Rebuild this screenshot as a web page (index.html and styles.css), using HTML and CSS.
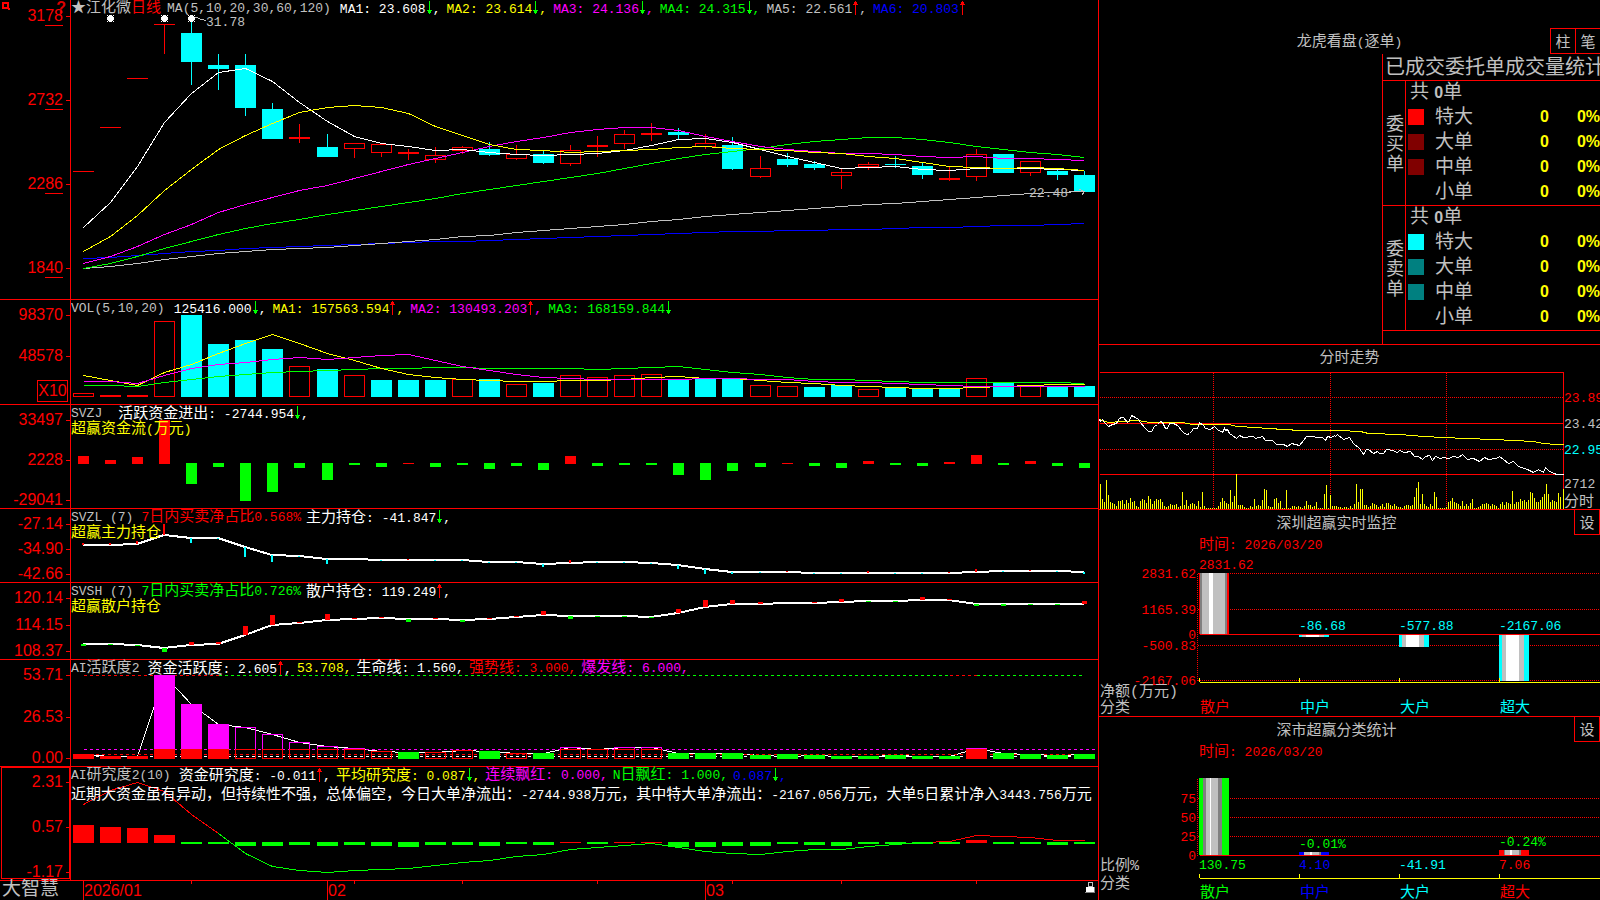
FILE: index.html
```html
<!DOCTYPE html>
<html lang="zh-CN">
<head>
<meta charset="utf-8">
<title>江化微 日线 - 大智慧</title>
<link rel="stylesheet" href="styles.css">
</head>
<body>
<svg class="defs" aria-hidden="true">
  <symbol id="down" viewBox="0 0 7 14"><path d="M3 0h1v9h2v1h-1v2h-1v1h-1v-1h-1v-2h-1v-1h2z"/></symbol>
  <symbol id="up" viewBox="0 0 7 14"><path d="M3 14h1v-10h2v-1h-1v-2h-1v-1h-1v1h-1v2h-1v1h2z"/></symbol>
</svg>
<main class="screen">
  <div class="charts">
    <section class="panel">
      <div class="axis axis-price">
        <svg class="mark" viewBox="0 0 8 8"><path d="M1 1h5v5h-5z M6 6l2 2"/></svg>
        <b class="help">?</b>
        <span class="tick">31<i>78</i></span><span class="tick">27<i>32</i></span><span class="tick">22<i>86</i></span><span class="tick">18<i>40</i></span>
      </div>
      <div class="plot">
        <svg class="layer" id="price"></svg>
        <header class="legend legend-wide legend-top">
          <span><em>★江化微</em><em class="red">日线</em></span>
          <span class="name">MA(5,10,20,30,60,120)</span>
          <span class="white">MA1: 23.608<svg class="arrow down"><use href="#down"/></svg>,</span>
          <span class="yellow">MA2: 23.614<svg class="arrow down"><use href="#down"/></svg>,</span>
          <span class="magenta">MA3: 24.136<svg class="arrow down"><use href="#down"/></svg>,</span>
          <span class="green">MA4: 24.315<svg class="arrow down"><use href="#down"/></svg>,</span>
          <span class="gray">MA5: 22.561<svg class="arrow up"><use href="#up"/></svg>,</span>
          <span class="blue">MA6: 20.803<svg class="arrow up"><use href="#up"/></svg></span>
        </header>
      </div>
    </section>

    <section class="panel">
      <div class="axis axis-volume"><span class="tick">98370</span><span class="tick">48578</span><span class="unit">X10</span></div>
      <div class="plot">
        <svg class="layer" id="volume"></svg>
        <header class="legend legend-wide">
          <span class="name">VOL(5,10,20)</span>
          <span class="white">125416.000<svg class="arrow down"><use href="#down"/></svg>,</span>
          <span class="yellow">MA1: 157563.594<svg class="arrow up"><use href="#up"/></svg>,</span>
          <span class="magenta">MA2: 130493.203<svg class="arrow up"><use href="#up"/></svg>,</span>
          <span class="green">MA3: 168159.844<svg class="arrow down"><use href="#down"/></svg></span>
        </header>
      </div>
    </section>

    <section class="panel">
      <div class="axis"><span class="tick">33497</span><span class="tick">2228</span><span class="tick">-29041</span></div>
      <div class="plot">
        <svg class="layer" id="flow"></svg>
        <header class="legend">
          <span class="name wide">SVZJ</span>
          <span class="white"><em>活跃资金进出</em>: -2744.954<svg class="arrow down"><use href="#down"/></svg>,</span>
        </header>
        <p class="sub yellow">超赢资金流<small>(</small>万元<small>)</small></p>
      </div>
    </section>

    <section class="panel">
      <div class="axis"><span class="tick">-27.14</span><span class="tick">-34.90</span><span class="tick">-42.66</span></div>
      <div class="plot">
        <svg class="layer" id="major"></svg>
        <header class="legend">
          <span class="name">SVZL (7)</span>
          <span class="red">7<em>日内买卖净占比</em>0.568%</span>
          <span class="white"><em>主力持仓</em>: -41.847<svg class="arrow down"><use href="#down"/></svg>,</span>
        </header>
        <p class="sub yellow">超赢主力持仓</p>
      </div>
    </section>

    <section class="panel">
      <div class="axis"><span class="tick">120.14</span><span class="tick">114.15</span><span class="tick">108.37</span></div>
      <div class="plot">
        <svg class="layer" id="retail"></svg>
        <header class="legend">
          <span class="name">SVSH (7)</span>
          <span class="green">7<em>日内买卖净占比</em>0.726%</span>
          <span class="white"><em>散户持仓</em>: 119.249<svg class="arrow up"><use href="#up"/></svg>,</span>
        </header>
        <p class="sub yellow">超赢散户持仓</p>
      </div>
    </section>

    <section class="panel">
      <div class="axis"><span class="tick">53.71</span><span class="tick">26.53</span><span class="tick">0.00</span></div>
      <div class="plot">
        <svg class="layer" id="activity"></svg>
        <header class="legend">
          <span class="name">AI<em>活跃度</em>2</span>
          <span class="white"><em>资金活跃度</em>: 2.605<svg class="arrow up"><use href="#up"/></svg>,</span>
          <span class="yellow">53.708,</span>
          <span class="white"><em>生命线</em>: 1.560,</span>
          <span class="red"><em>强势线</em>: 3.000,</span>
          <span class="magenta"><em>爆发线</em>: 6.000,</span>
        </header>
      </div>
    </section>

    <section class="panel">
      <div class="axis axis-active"><span class="tick">2.31</span><span class="tick">0.57</span><span class="tick">-1.17</span></div>
      <div class="plot">
        <svg class="layer" id="research"></svg>
        <header class="legend">
          <span class="name">AI<em>研究度</em>2(10)</span>
          <span class="white"><em>资金研究度</em>: -0.011<svg class="arrow up"><use href="#up"/></svg>,</span>
          <span class="yellow"><em>平均研究度</em>: 0.087<svg class="arrow down"><use href="#down"/></svg>,</span>
          <span class="magenta"><em>连续飘红</em>: 0.000,</span>
          <span class="green">N<em>日飘红</em>: 1.000,</span>
          <span class="blue">0.087<svg class="arrow down"><use href="#down"/></svg>,</span>
        </header>
        <p class="comment">近期大资金虽有异动，但持续性不强，总体偏空，今日大单净流出：<small>-2744.938</small>万元，其中特大单净流出：<small>-2167.056</small>万元，大单<small>5</small>日累计净入<small>3443.756</small>万元</p>
      </div>
    </section>

    <footer class="panel timeline">
      <div class="brand">大智慧</div>
      <div class="plot"><svg class="layer" id="dates"></svg></div>
    </footer>
  </div>

  <aside class="side">
    <section class="block orders">
      <header class="orders-head">
        <h2 class="title">龙虎看盘<small>(</small>逐单<small>)</small></h2>
        <div class="buttons"><button type="button">柱</button><button type="button">笔</button></div>
      </header>
      <div class="orders-body">
        <div class="stats">
          <h3>已成交委托单成交量统计</h3>
          <table>
            <colgroup><col class="col-side"><col class="col-key"><col class="col-size"><col class="col-count"><col></colgroup>
            <tbody>
              <tr><th class="direction" rowspan="5" scope="rowgroup">委<br>买<br>单</th><td class="total" colspan="4">共 <b>0</b>单</td></tr>
              <tr><td class="key"><i class="swatch buy-max"></i></td><td class="size">特大</td><td class="count">0</td><td class="share">0%</td></tr>
              <tr><td class="key"><i class="swatch buy"></i></td><td class="size">大单</td><td class="count">0</td><td class="share">0%</td></tr>
              <tr><td class="key"><i class="swatch buy"></i></td><td class="size">中单</td><td class="count">0</td><td class="share">0%</td></tr>
              <tr><td class="key"></td><td class="size">小单</td><td class="count">0</td><td class="share">0%</td></tr>
            </tbody>
            <tbody>
              <tr><th class="direction" rowspan="5" scope="rowgroup">委<br>卖<br>单</th><td class="total" colspan="4">共 <b>0</b>单</td></tr>
              <tr><td class="key"><i class="swatch sell-max"></i></td><td class="size">特大</td><td class="count">0</td><td class="share">0%</td></tr>
              <tr><td class="key"><i class="swatch sell"></i></td><td class="size">大单</td><td class="count">0</td><td class="share">0%</td></tr>
              <tr><td class="key"><i class="swatch sell"></i></td><td class="size">中单</td><td class="count">0</td><td class="share">0%</td></tr>
              <tr><td class="key"></td><td class="size">小单</td><td class="count">0</td><td class="share">0%</td></tr>
            </tbody>
          </table>
        </div>
      </div>
    </section>

    <section class="block">
      <h2 class="title intraday-title">分时走势</h2>
      <div class="plot"><svg class="layer" id="intraday"></svg></div>
    </section>

    <section class="block">
      <header class="block-head"><h2 class="title">深圳超赢实时监控</h2><button type="button">设</button></header>
      <p class="time red">时间<small>: 2026/03/20</small></p>
      <div class="plot"><svg class="layer" id="monitor"></svg></div>
    </section>

    <section class="block">
      <header class="block-head"><h2 class="title">深市超赢分类统计</h2><button type="button">设</button></header>
      <p class="time red">时间<small>: 2026/03/20</small></p>
      <div class="plot"><svg class="layer" id="category"></svg></div>
    </section>
  </aside>
</main>
<script src="charts.js"></script>
</body>
</html>
```

FILE: styles.css
```css
* {
  box-sizing: border-box;
}

body {
  margin: 0;
  background: #000;
  color: #c0c0c0;
  font-family: "Liberation Mono", "Noto Sans CJK SC", monospace;
  font-size: 13px;
  line-height: 15px;
}

h2,
h3,
p {
  margin: 0;
  font-weight: 400;
}

em,
i {
  font-style: normal;
}

em {
  font-size: 15px;
}

small {
  font-size: 13px;
}

.defs {
  position: absolute;
  width: 0;
  height: 0;
}

.red { color: #f00; }
.green { color: #0f0; }
.blue { color: #00f; }
.yellow { color: #ff0; }
.magenta { color: #f0f; }
.white { color: #fff; }
.gray { color: #c0c0c0; }

.screen {
  display: grid;
  grid-template-columns: minmax(0, 1099fr) minmax(0, 501fr);
  grid-template-rows: minmax(0, 1fr);
  height: 100vh;
  overflow: hidden;
}

/* Left column: stacked indicator panels */

.charts {
  display: grid;
  grid-template-rows:
    minmax(0, 299fr) minmax(0, 105fr) minmax(0, 104fr) minmax(0, 74fr)
    minmax(0, 77fr) minmax(0, 107fr) minmax(0, 114fr) minmax(0, 20fr);
  border-right: 1px solid #f00;
}

.panel {
  display: grid;
  grid-template-columns: 71px minmax(0, 1fr);
  grid-template-rows: minmax(0, 1fr);
}

.panel + .panel {
  box-shadow: inset 0 1px #f00;
}

.axis {
  display: flex;
  flex-direction: column;
  justify-content: space-between;
  position: relative;
  padding: 8px 0 0;
  border-right: 1px solid #f00;
  color: #f00;
  font-family: "Liberation Sans", sans-serif;
  font-size: 16px;
  line-height: 16px;
  text-align: right;
}

.tick {
  display: block;
  position: relative;
  padding-right: 7px;
}

.tick::after {
  content: "";
  position: absolute;
  top: 8px;
  right: 0;
  width: 4px;
  height: 1px;
  background: #f00;
}

.axis-price {
  padding-bottom: 23px;
}

.axis-price i {
  display: inline-block;
  height: 18px;
  margin-bottom: -2px;
  border-bottom: 1px solid #f00;
}

.axis-volume {
  justify-content: flex-start;
  gap: 25px;
}

.axis-active {
  outline: 1px solid #f00;
  outline-offset: -2px;
}

.unit {
  align-self: flex-end;
  width: 31px;
  margin: -9px 2px 0 0;
  border: 1px solid #f00;
  line-height: 20px;
  text-align: center;
}

.mark {
  position: absolute;
  top: 2px;
  left: 2px;
  width: 8px;
  height: 8px;
  fill: none;
  stroke: #f00;
  stroke-width: 2;
  shape-rendering: crispEdges;
}

.help {
  position: absolute;
  top: 0;
  right: 4px;
  color: #d00;
}

.plot {
  position: relative;
  overflow: hidden;
  min-height: 0;
}

.layer {
  position: absolute;
  inset: 0;
  width: 100%;
  height: 100%;
  shape-rendering: crispEdges;
}

.layer .num {
  font-size: 13px;
}

.layer .cjk {
  font-size: 15px;
}

.layer .date {
  font-family: "Liberation Sans", sans-serif;
  font-size: 16px;
}

.legend {
  display: flex;
  gap: 5px;
  position: relative;
  padding-top: 2px;
  white-space: nowrap;
}

.legend-wide {
  gap: 6px;
}

.legend-top {
  padding: 1px 0 0;
}

.name {
  margin-right: 3px;
}

.wide {
  margin-right: 11px;
}

.arrow {
  width: 7px;
  height: 14px;
  vertical-align: -2px;
}

.down { fill: #0f0; }
.up { fill: #f00; }

.sub,
.comment {
  position: relative;
  font-size: 15px;
  white-space: nowrap;
}

.comment {
  padding-top: 4px;
  color: #fff;
}

.brand {
  padding-left: 2px;
  font-size: 19px;
  line-height: 20px;
  white-space: nowrap;
}

/* Right column */

.side {
  display: grid;
  grid-template-rows: minmax(0, 344fr) minmax(0, 165fr) minmax(0, 207fr) minmax(0, 184fr);
}

.block {
  display: flex;
  flex-direction: column;
}

.block + .block {
  box-shadow: inset 0 1px #f00;
}

.block .plot {
  flex: 1;
}

.title {
  font-size: 15px;
  text-align: center;
}

button {
  width: 26px;
  height: 26px;
  padding: 0;
  border: 1px solid #f00;
  background: #000;
  color: #c0c0c0;
  font: 15px "Noto Sans CJK SC", sans-serif;
  line-height: 20px;
}

.orders-head {
  display: grid;
  grid-template-columns: 1fr auto 1fr;
  align-items: center;
  padding-top: 28px;
}

.orders-head .title {
  grid-column: 2;
  padding-top: 2px;
}

.buttons {
  display: flex;
  justify-self: end;
}

.buttons button {
  width: 25px;
  border-right: 0;
}

.orders-body {
  display: flex;
  flex: 1;
  justify-content: flex-end;
}

.stats {
  width: 218px;
  border-left: 1px solid #f00;
  overflow: hidden;
}

.stats h3 {
  padding: 4px 0 0 2px;
  font-size: 20px;
  line-height: 22px;
  white-space: nowrap;
}

.stats table {
  width: 100%;
  border-spacing: 0;
  table-layout: fixed;
  box-shadow: inset 0 1px #f00, 0 1px #f00;
  font-size: 19px;
  line-height: 20px;
}

.stats tbody + tbody {
  box-shadow: inset 0 1px #f00;
}

.col-side { width: 23px; }
.col-key { width: 25px; }
.col-size { width: 60px; }
.col-count { width: 58px; }

.stats td {
  height: 25px;
  padding: 0;
}

.stats .direction {
  padding: 0 0 30px 2px;
  border-right: 1px solid #f00;
  font-size: 18px;
  font-weight: 400;
  vertical-align: bottom;
}

.stats .total {
  padding-left: 4px;
  font-family: "Liberation Sans", "Noto Sans CJK SC", sans-serif;
}

.total b {
  font-size: 16px;
}

.stats .key {
  padding: 0 0 2px 2px;
}

.swatch {
  display: block;
  width: 16px;
  height: 16px;
}

.buy-max { background: #f00; }
.buy { background: #800000; }
.sell-max { background: #0ff; }
.sell { background: #008080; }

.stats .size {
  padding-left: 4px;
}

.stats .count,
.stats .share {
  padding-bottom: 2px;
  color: #ff0;
  font: 700 16px "Liberation Sans", sans-serif;
  text-align: right;
}

.intraday-title {
  padding-top: 2px;
  line-height: 26px;
}

.block-head {
  display: flex;
}

.block-head .title {
  flex: 1;
  padding-top: 6px;
  line-height: 20px;
}

.time {
  padding: 4px 0 0 100px;
  font-size: 15px;
  line-height: 14px;
}
```

FILE: charts.js
```js
(function () {
  var NS = 'http://www.w3.org/2000/svg';
  var C = { r: '#f00', c: '#0ff', g: '#0f0', y: '#ff0', m: '#f0f', b: '#00f', w: '#fff', s: '#c0c0c0', d: '#808080' };

  function Canvas(id, baseW, baseH) {
    this.svg = document.getElementById(id);
    this.svg.textContent = '';
    var box = this.svg.getBoundingClientRect();
    this.kx = box.width / baseW;
    this.ky = box.height / baseH;
  }
  Canvas.prototype.add = function (tag, attrs, text) {
    var el = document.createElementNS(NS, tag);
    for (var k in attrs) el.setAttribute(k, attrs[k]);
    if (text) el.textContent = text;
    this.svg.appendChild(el);
  };
  Canvas.prototype.x = function (v) { return Math.round(v * this.kx); };
  Canvas.prototype.y = function (v) { return Math.round(v * this.ky); };
  Canvas.prototype.rect = function (x, y, w, h, color) {
    this.add('rect', { x: this.x(x), y: this.y(y), width: w, height: Math.max(1, this.y(y + h) - this.y(y)), fill: C[color] });
  };
  Canvas.prototype.frame = function (x, y, w, h, color) {
    this.add('rect', { x: this.x(x) + 0.5, y: this.y(y) + 0.5, width: w - 1, height: Math.max(1, this.y(y + h) - this.y(y) - 1), fill: 'none', stroke: C[color] });
  };
  Canvas.prototype.path = function (points, color, width, dash) {
    var self = this, half = width === 2 ? 0 : 0.5;
    var a = { points: points.map(function (p) { return (self.x(p[0]) + half) + ',' + (self.y(p[1]) + half); }).join(' '), fill: 'none', stroke: C[color], 'stroke-width': width || 1 };
    if (dash) a['stroke-dasharray'] = dash;
    this.add('polyline', a);
  };
  Canvas.prototype.text = function (x, y, s, color, cls, anchor) {
    this.add('text', { x: this.x(x), y: this.y(y) + (cls === 'num' ? 4 : 6), fill: C[color], 'class': cls, 'text-anchor': anchor || 'start' }, s);
  };

  var W = 1027;
  function cx(i) { return Math.round(12 + 27.06 * i); }
  function series(values, from) {
    return values.map(function (v, i) { return [cx(i + (from || 0)), v]; });
  }

  /* type, body top, body bottom, high, low */
  var candles = [
    ['r',171,172,171,171],['r',127,128,127,127],['r',78,79,78,78],['r',24,25,24,54],['c',33,62,20,85],['c',65,69,54,90],
    ['c',65,108,54,116],['c',109,139,103,139],['r',137,139,124,143],['c',147,157,134,157],['h',143,149,143,158],['h',144,153,144,157],
    ['r',152,154,149,160],['h',155,160,147,163],['h',147,151,146,154],['c',149,155,142,156],['h',154,159,145,160],['c',154,163,151,164],
    ['h',150,164,145,166],['r',145,147,136,157],['h',134,144,130,149],['r',133,135,123,141],['c',132,135,128,139],['h',143,147,134,149],
    ['c',145,169,137,170],['h',168,177,156,178],['c',159,165,153,167],['c',164,168,161,170],['h',172,176,169,189],['h',164,167,162,170],
    ['c',164,165,156,168],['c',166,175,162,179],['r',178,180,167,181],['h',154,177,149,181],['c',154,173,154,173],['h',161,173,161,176],
    ['c',171,175,168,180],['c',175,192,171,192]
  ];
  var ma = {
    b: [258,257,255,253,251,250,248,247,246,245,244,243,242,241,241,240,239,238,237,236,235,234,233,232,231,231,230,230,229,229,228,227,227,226,225,225,224,223],
    s: [268,266,263,259,256,253,251,249,248,247,245,243,241,239,236,235,232,230,228,226,224,221,219,216,214,212,210,208,206,204,203,201,199,197,195,193,192,191],
    g: [268,263,256,248,241,234,228,223,219,214,210,206,202,198,193,189,185,181,177,173,168,163,158,154,151,148,144,141,139,137,137,139,142,146,149,152,154,157],
    m: [263,256,246,234,224,212,204,197,190,185,178,171,164,158,152,146,141,137,132,129,127,127,130,136,141,146,149,151,153,153,154,156,157,156,158,158,159,160],
    w: [227,202,166,122,93,72,68,81,102,121,136,143,146,150,149,152,154,155,154,153,150,145,139,138,142,149,156,162,168,167,166,169,170,168,168,168,169,170],
    y: [251,236,215,190,169,149,135,123,112,107,105,107,113,126,135,144,149,150,152,151,150,149,147,146,148,149,150,152,153,156,158,162,166,167,168,167,168,170]
  };

  function drawPrice() {
    var p = new Canvas('price', W, 299);
    candles.forEach(function (k, i) {
      var x = cx(i), color = k[0] === 'c' ? 'c' : 'r';
      if (k[0] === 'h') {
        if (k[3] < k[1]) p.rect(x, k[3], 1, k[1] - k[3], 'r');
        if (k[4] > k[2]) p.rect(x, k[2], 1, k[4] - k[2], 'r');
        p.frame(x - 10, k[1], 21, k[2] - k[1], 'r');
      } else {
        if (k[4] > k[3]) p.rect(x, k[3], 1, k[4] - k[3], color);
        p.rect(x - 10, k[1], 21, k[2] - k[1], color);
      }
    });
    Object.keys(ma).forEach(function (c) { p.path(series(ma[c]), c); });
    [1, 3, 4].forEach(function (i) {
      var x = cx(i);
      p.rect(x - 2, 16, 5, 5, 'w');
      p.rect(x - 3, 17, 7, 3, 'w');
      p.rect(x - 1, 15, 3, 7, 'w');
      [[-3, 15], [3, 15], [-3, 21], [3, 21]].forEach(function (d) { p.rect(x + d[0], d[1], 1, 1, 'w'); });
    });
    p.path([[123, 17], [126, 17], [129, 19], [132, 19], [135, 21]], 's');
    p.text(135, 22, '31.78', 's', 'num');
    p.text(958, 193, '22.48', 's', 'num');
    p.path([[997, 191], [1013, 191]], 's');
    p.path([[1008, 189], [1013, 191], [1010, 195]], 's');
  }

  function drawVolume() {
    var p = new Canvas('volume', W, 105);
    var kind = 'hrrhcccchchccchchchhhhccchhcchccchchcc';
    var top = [94,96,96,22,16,45,41,50,67,70,76,81,81,81,80,80,85,84,76,78,76,75,81,80,80,86,87,88,86,90,89,90,90,79,84,87,88,87];
    top.forEach(function (t, i) {
      if (kind[i] === 'h') p.frame(cx(i) - 10, t, 21, 98 - t, 'r');
      else p.rect(cx(i) - 10, t, 21, 98 - t, kind[i]);
    });
    function scale(a) { return series(a.map(function (v) { return v / 3 - 9; })); }
    p.path(scale([286,286,289,277,268,259,253,247,244,241,238,235,235,232,232,234,235,235,235,238,235,232,229,238,247,253,262,268,268,270,273,277,277,277,277,277,277,280]), 'g');
    p.path(scale([256,270,284,247,222,190,158,133,160,189,211,234,252,262,268,271,272,274,270,270,266,262,259,263,263,270,276,280,284,288,292,295,295,290,287,286,283,283]), 'y');
    p.path(scale([274,274,278,254,235,223,217,208,202,208,202,196,193,211,229,241,253,262,265,268,268,268,268,265,265,268,268,273,275,277,280,283,286,287,289,289,289,289]), 'm');
  }

  function drawFlow() {
    var p = new Canvas('flow', W, 104);
    var ends = [52,56,53,16,80,63,97,88,64,76,61,63,59,63,61,65,62,66,52,62,61,61,71,76,67,63,59,62,64,57,61,62,58,51,61,57,62,64];
    ends.forEach(function (v, i) {
      if (v < 60) p.rect(cx(i) - 5, v, 11, 60 - v, 'r');
      else p.rect(cx(i) - 5, 59, 11, v - 59, 'g');
    });
  }

  function drawHolding(id, h, line, delta, width, negative) {
    var p = new Canvas(id, W, h);
    p.path(series(line), 'w', 2);
    delta.forEach(function (d, i) {
      if (d < 0) p.rect(cx(i) - width / 2, line[i] + d, width, -d, 'r');
      if (d > 0) p.rect(cx(i) - width / 2, line[i], width, d, negative);
    });
  }

  function drawActivity() {
    var p = new Canvas('activity', W, 107);
    var top = [95,97,97,16,45,65,68,75,83,87,89,92,93,93,91,92,94,94,88,90,88,88,94,94,94,96,95,96,97,97,96,97,97,89,94,95,96,95];
    var kind = 'RRRMMMmmmmmrgrrgrgmrmmgggggggggggMgggg';
    p.path(series(top), 'w');
    p.path([[cx(0), 90], [W, 90]], 'm', 1, '3 3');
    p.path([[cx(0), 95], [W, 95]], 'r', 1, '3 3');
    p.path([[cx(0), 97], [W, 97]], 'w', 1, '3 3');
    p.path([[cx(0), 16], [cx(5), 16]], 'r', 1, '3 3');
    p.path([[cx(5), 16], [cx(32), 16]], 'g', 1, '3 3');
    p.path([[cx(32), 16], [cx(33), 16]], 'r', 1, '3 3');
    p.path([[cx(33), 16], [cx(37), 16]], 'g', 1, '3 3');
    top.forEach(function (t, i) {
      var x = cx(i) - 10, k = kind[i];
      if (k === 'R') p.rect(x, t, 21, 100 - t, 'r');
      if (k === 'g') p.rect(x, t, 21, 100 - t, 'g');
      if (k === 'r') p.frame(x, t, 21, 100 - t, 'r');
      if (k === 'M') { p.rect(x, t, 21, 90 - t, 'm'); p.rect(x, 90, 21, 10, 'r'); }
      if (k === 'm') { p.frame(x, t, 21, 91 - t, 'm'); p.frame(x, 90, 21, 10, 'r'); }
    });
  }

  function drawResearch() {
    var p = new Canvas('research', W, 114);
    var ends = [59,61,62,69,78,78,80,80,79,80,79,80,81,79,79,80,78,79,76,78,76,76,81,81,80,80,78,79,80,78,78,78,78,74,78,78,79,78];
    var line = [38,24,16,25,48,67,87,100,104,106,104,103,102,99,96,94,90,88,83,81,79,77,81,85,87,88,85,83,83,80,78,76,75,69,70,71,74,74];
    p.path(series(line.slice(0, 6)), 'r');
    p.path(series(line.slice(5, 32), 5), 'g');
    p.path(series(line.slice(31), 31), 'r');
    ends.forEach(function (v, i) {
      if (v < 77) p.rect(cx(i) - 10, v, 21, 77 - v, 'r');
      else p.rect(cx(i) - 10, 76, 21, v - 76, 'g');
    });
  }

  function drawDates() {
    var p = new Canvas('dates', W, 20);
    [['2026/01', 0], ['02', 9], ['03', 23]].forEach(function (d) {
      p.rect(cx(d[1]), 0, 1, 20, 'r');
      p.text(cx(d[1]) + 1, 10, d[0], 'r', 'date');
    });
    [1, 4, 10, 14, 19, 24, 28, 33].forEach(function (i) { p.rect(cx(i), 0, 1, 4, 'r'); });
    p.frame(1017, 2, 5, 5, 's');
    p.rect(1015, 7, 8, 5, 'w');
    p.rect(1023, 7, 1, 6, 'd');
    p.rect(1014, 12, 10, 1, 'd');
  }

  function drawIntraday() {
    var p = new Canvas('intraday', 501, 137);
    function local(flat) {
      var out = [];
      for (var i = 0; i < flat.length; i += 2) out.push([flat[i] / 3 - 9, flat[i + 1] / 3 - 32.3]);
      return out;
    }
    p.path([[0, 0], [464, 0], [464, 137]], 'r');
    p.path([[0, 25], [464, 25]], 'r', 1, '1 1');
    p.path([[0, 77], [464, 77]], 'r', 1, '1 1');
    p.path([[0, 51], [464, 51]], 'r');
    p.path([[0, 102], [464, 102]], 'r');
    [114, 231, 347].forEach(function (x) { p.path([[x, 0], [x, 136]], 'r', 1, '1 1'); });
    var vol = [75,30,20,87,42,21,19,14,8,24,25,28,14,28,18,34,20,25,8,5,25,30,27,18,40,30,15,25,30,28,30,22,10,6,8,15,12,13,15,5,8,51,12,28,8,16,19,15,8,24,6,51,
      10,3,3,3,3,3,4,8,20,34,24,19,15,56,22,40,105,12,12,12,5,3,3,8,5,30,8,12,8,28,60,57,8,5,5,30,32,18,24,4,4,57,4,4,10,8,5,10,6,4,9,24,12,12,6,9,21,4,4,3,45,72,4,42,8,8,8,5,5,3,7,7,4,8,4,16,75,20,60,60,12,12,5,8,18,15,12,
      5,8,16,6,19,18,12,8,14,10,5,7,4,8,12,12,8,12,36,62,82,16,45,14,8,5,14,10,50,36,4,3,3,3,6,20,24,34,22,18,16,10,24,8,16,10,18,30,4,4,6,10,15,15,18,14,10,16,12,8,4,16,20,12,22,18,16,54,14,20,22,30,24,28,20,26,50,48,34,22,20,28,36,44,74,46,22,28,24,20,48,36];
    vol.forEach(function (v, i) { p.rect((31 + 6 * i) / 3 - 9, 137 - v / 3, 1, v / 3, 'y'); });
    p.rect(464, 117, 1, 20, 'y');
    p.path(local([27,237,55,247,95,245,140,242,180,247,275,248,305,253,415,254,440,259,495,261,535,265,630,270,745,272,810,275,835,280,930,282,1000,289,1060,292,1125,294,1210,298,1270,300,1330,305,1360,310,1395,313,1420,314]), 'y');
    p.path(local([27,238,31,244,36,238,42,248,55,259,65,252,78,250,86,236,92,232,100,232,110,246,117,240,122,226,135,232,145,238,150,248,162,262,175,273,183,273,192,258,200,252,210,244,217,248,224,265,230,264,236,250,250,249,262,255,275,273,282,280,290,283,297,279,302,275,310,265,320,265,328,248,338,256,345,265,360,268,371,260,380,268,395,276,402,264,406,270,412,268,418,280,425,286,438,295,446,286,460,292,490,290,495,295,515,290,525,300,545,300,558,312,580,313,592,318,602,310,628,316,640,300,648,290,695,292,704,300,712,290,722,293,731,285,736,289,742,284,758,298,778,292,790,309,808,325,820,343,828,327,835,327,850,340,860,335,866,340,878,340,888,329,905,332,920,337,928,332,942,336,960,335,972,348,985,350,995,358,1006,350,1017,347,1027,360,1035,348,1050,354,1060,352,1075,356,1090,350,1105,352,1117,343,1125,352,1130,358,1150,356,1168,363,1182,352,1195,357,1218,355,1226,350,1240,358,1254,370,1268,364,1285,378,1310,388,1328,397,1345,388,1360,396,1366,383,1375,392,1390,400,1402,403,1420,403]), 'w');
    p.text(465, 26, '23.89', 'r', 'num');
    p.text(465, 52, '23.42', 's', 'num');
    p.text(465, 78, '22.95', 'c', 'num');
    p.text(465, 112, '2712', 's', 'num');
    p.text(465, 128, '分时', 's', 'cjk');
  }

  function bar(p, x, y, h, stripes) {
    stripes.forEach(function (s) { p.rect(x, y, s[1], h, s[0]); x += s[1] / p.kx; });
  }
  function baseline(p, y) {
    p.path([[100, y], [501, y]], 'y');
    [100, 200, 300, 400].forEach(function (x) { p.rect(x, y - 4, 1, 4, 'y'); });
  }

  function drawMonitor() {
    var p = new Canvas('monitor', 501, 163);
    [20, 56, 92, 127].forEach(function (y) { p.path([[98, y], [501, y]], 'r', 1, '1 1'); });
    p.path([[98, 20], [98, 128]], 'r', 1, '1 1');
    bar(p, 100, 20, 61, [['r',1],['d',2],['s',7],['w',4],['s',12],['d',2],['r',2]]);
    [[200, 3], [300, 13], [400, 47]].forEach(function (b) {
      bar(p, b[0], 81, b[1], [['c',3],['s',4],['w',13],['s',5],['c',5]]);
    });
    p.path([[100, 81], [501, 81]], 'r');
    baseline(p, 129);
    [['2831.62', 21], ['1165.39', 57], ['0', 82], ['-500.83', 93], ['-2167.06', 128]].forEach(function (t) {
      p.text(97, t[1], t[0], 'r', 'num', 'end');
    });
    p.text(100, 12, '2831.62', 'r', 'num');
    p.text(200, 73, '-86.68', 'c', 'num');
    p.text(300, 73, '-577.88', 'c', 'num');
    p.text(400, 73, '-2167.06', 'c', 'num');
    p.text(1, 137, '净额(万元)', 's', 'cjk');
    p.text(1, 153, '分类', 's', 'cjk');
    p.text(101, 153, '散户', 'r', 'cjk');
    p.text(201, 153, '中户', 'c', 'cjk');
    p.text(301, 153, '大户', 'c', 'cjk');
    p.text(401, 153, '超大', 'c', 'cjk');
  }

  function drawCategory() {
    var p = new Canvas('category', 501, 140);
    [38, 57, 76].forEach(function (y) { p.path([[98, y], [501, y]], 'r', 1, '1 1'); });
    p.path([[98, 18], [98, 95]], 'r', 1, '1 1');
    bar(p, 100, 18, 77, [['g',4],['d',3],['s',4],['w',1],['s',7],['d',4],['g',7]]);
    bar(p, 200, 92, 3, [['b',5],['s',6],['w',2],['s',7],['d',2],['b',8]]);
    bar(p, 400, 90, 5, [['r',5],['d',1],['s',5],['w',2],['s',7],['d',2],['r',8]]);
    p.path([[100, 95], [501, 95]], 'r');
    baseline(p, 118);
    [['75', 39], ['50', 58], ['25', 77], ['0', 96]].forEach(function (t) { p.text(97, t[1], t[0], 'r', 'num', 'end'); });
    p.text(200, 84, '-0.01%', 'g', 'num');
    p.text(400, 82, '-0.24%', 'g', 'num');
    p.text(100, 105, '130.75', 'g', 'num');
    p.text(200, 105, '4.10', 'b', 'num');
    p.text(300, 105, '-41.91', 'c', 'num');
    p.text(400, 105, '7.06', 'r', 'num');
    p.text(1, 104, '比例%', 's', 'cjk');
    p.text(1, 122, '分类', 's', 'cjk');
    p.text(101, 131, '散户', 'g', 'cjk');
    p.text(201, 131, '中户', 'b', 'cjk');
    p.text(301, 131, '大户', 'c', 'cjk');
    p.text(401, 131, '超大', 'r', 'cjk');
  }

  function draw() {
    drawPrice();
    drawVolume();
    drawFlow();
    drawHolding('major', 74,
      [37,37,36,27,30,30,39,47,48,51,51,52,52,52,52,54,54,56,55,54,54,55,57,61,64,64,64,65,65,65,65,65,65,64,63,63,63,64],
      [-2,-2,-3,-11,5,1,10,7,1,5,0,1,-1,1,1,1,1,3,-3,1,1,1,4,5,2,1,-1,1,1,-2,1,1,-1,-3,1,-1,1,2], 2, 'c');
    drawHolding('retail', 77,
      [62,62,63,66,63,62,53,43,41,38,37,36,37,37,38,37,35,33,34,34,34,35,31,25,22,22,21,21,20,19,19,18,18,22,22,22,22,22],
      [2,1,1,4,-3,-2,-9,-10,-1,-6,-1,-1,3,-1,2,-1,-1,-4,3,1,1,1,-4,-7,-4,-2,0,-1,-3,1,1,-3,-1,2,2,1,1,-3], 5, 'g');
    drawActivity();
    drawResearch();
    drawDates();
    drawIntraday();
    drawMonitor();
    drawCategory();
  }

  draw();
  window.addEventListener('resize', draw);
})();
```
